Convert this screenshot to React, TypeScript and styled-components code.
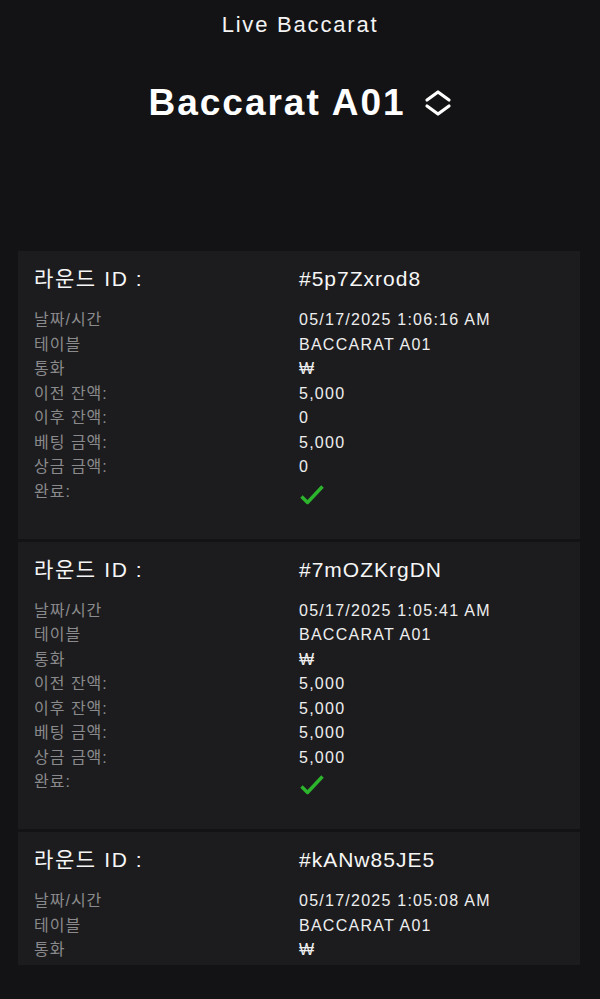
import styled, { createGlobalStyle } from "styled-components";

const GlobalStyle = createGlobalStyle`
    html, body {
        margin: 0;
        padding: 0;
        background-color: #131315;
    }
    body {
        font-family: "Liberation Sans", Arial, "Noto Sans CJK KR", sans-serif;
        color: #f2f2f2;
    }
`;

const Page = styled.div`
    width: 600px;
    height: 999px;
    overflow: hidden;
    background-color: #131315;
    display: flex;
    flex-direction: column;
`;

const Header = styled.header`
    display: flex;
    flex-direction: column;
    align-items: center;
    padding-top: 12px;
`;

const SubTitle = styled.div`
    font-size: 22px;
    letter-spacing: 1.8px;
    color: #f4f4f4;
`;

const TableSelect = styled.div`
    margin-top: 44px;
    display: flex;
    align-items: center;
    gap: 18px;
`;

const TableName = styled.h1`
    margin: 0;
    font-size: 37px;
    font-weight: 700;
    letter-spacing: 2px;
    color: #ffffff;
`;

const List = styled.div`
    margin: 127px 20px 0 18px;
    height: 714px;
    overflow: hidden;
    display: flex;
    flex-direction: column;
    gap: 3px;
`;

const Card = styled.section`
    flex-shrink: 0;
    background-color: #1c1c1e;
    padding: 16px 16px 31px;
`;

const TwoCol = styled.div`
    display: grid;
    grid-template-columns: 1fr 1fr;
`;

const CardHead = styled(TwoCol)`
    line-height: 24px;
    color: #f6f6f6;
    margin-bottom: 17px;
`;

const HeadLabel = styled.span`
    font-size: 21px;
    letter-spacing: 1.6px;
`;

const HeadValue = styled.span`
    font-size: 21px;
    letter-spacing: 1px;
`;

const Row = styled(TwoCol)`
    font-size: 16px;
    line-height: 24.5px;
`;

const Label = styled.span`
    color: #8a8a8c;
    letter-spacing: 1px;
`;

const Value = styled.span`
    color: #eeeeee;
    letter-spacing: 1.25px;
`;

const Check = styled.svg`
    display: block;
    margin: 4px 0 2px;
`;

interface IRound {
    id: string;
    date: string;
    table: string;
    before: string;
    after: string;
    bet: string;
    win: string;
}

const rounds: IRound[] = [
    {
        id: "#5p7Zxrod8",
        date: "05/17/2025 1:06:16 AM",
        table: "BACCARAT A01",
        before: "5,000",
        after: "0",
        bet: "5,000",
        win: "0",
    },
    {
        id: "#7mOZKrgDN",
        date: "05/17/2025 1:05:41 AM",
        table: "BACCARAT A01",
        before: "5,000",
        after: "5,000",
        bet: "5,000",
        win: "5,000",
    },
    {
        id: "#kANw85JE5",
        date: "05/17/2025 1:05:08 AM",
        table: "BACCARAT A01",
        before: "5,000",
        after: "0",
        bet: "5,000",
        win: "0",
    },
];

const ChevronsUpDown = () => (
    <svg width="28" height="26" viewBox="0 0 28 26" fill="none">
        <path
            d="M3 10 L14 2 L25 10 M3 16 L14 24 L25 16"
            stroke="#ffffff"
            strokeWidth="3.2"
            strokeLinecap="round"
            strokeLinejoin="round"
        />
    </svg>
);

const RoundCard = ({ round }: { round: IRound }) => (
    <Card>
        <CardHead>
            <HeadLabel>라운드 ID :</HeadLabel>
            <HeadValue>{round.id}</HeadValue>
        </CardHead>
        <Row>
            <Label>날짜/시간</Label>
            <Value>{round.date}</Value>
        </Row>
        <Row>
            <Label>테이블</Label>
            <Value>{round.table}</Value>
        </Row>
        <Row>
            <Label>통화</Label>
            <Value>₩</Value>
        </Row>
        <Row>
            <Label>이전 잔액:</Label>
            <Value>{round.before}</Value>
        </Row>
        <Row>
            <Label>이후 잔액:</Label>
            <Value>{round.after}</Value>
        </Row>
        <Row>
            <Label>베팅 금액:</Label>
            <Value>{round.bet}</Value>
        </Row>
        <Row>
            <Label>상금 금액:</Label>
            <Value>{round.win}</Value>
        </Row>
        <Row>
            <Label>완료:</Label>
            <Check width="26" height="22" viewBox="0 0 26 22" fill="none">
                <path
                    d="M2.5 12.5 L8.5 18.5 L23.5 2.5"
                    stroke="#2cb52c"
                    strokeWidth="3.4"
                    strokeLinejoin="round"
                />
            </Check>
        </Row>
    </Card>
);

export default function App() {
    return (
        <Page>
            <GlobalStyle />
            <Header>
                <SubTitle>Live Baccarat</SubTitle>
                <TableSelect>
                    <TableName>Baccarat A01</TableName>
                    <ChevronsUpDown />
                </TableSelect>
            </Header>
            <List>
                {rounds.map((round) => (
                    <RoundCard key={round.id} round={round} />
                ))}
            </List>
        </Page>
    );
}
